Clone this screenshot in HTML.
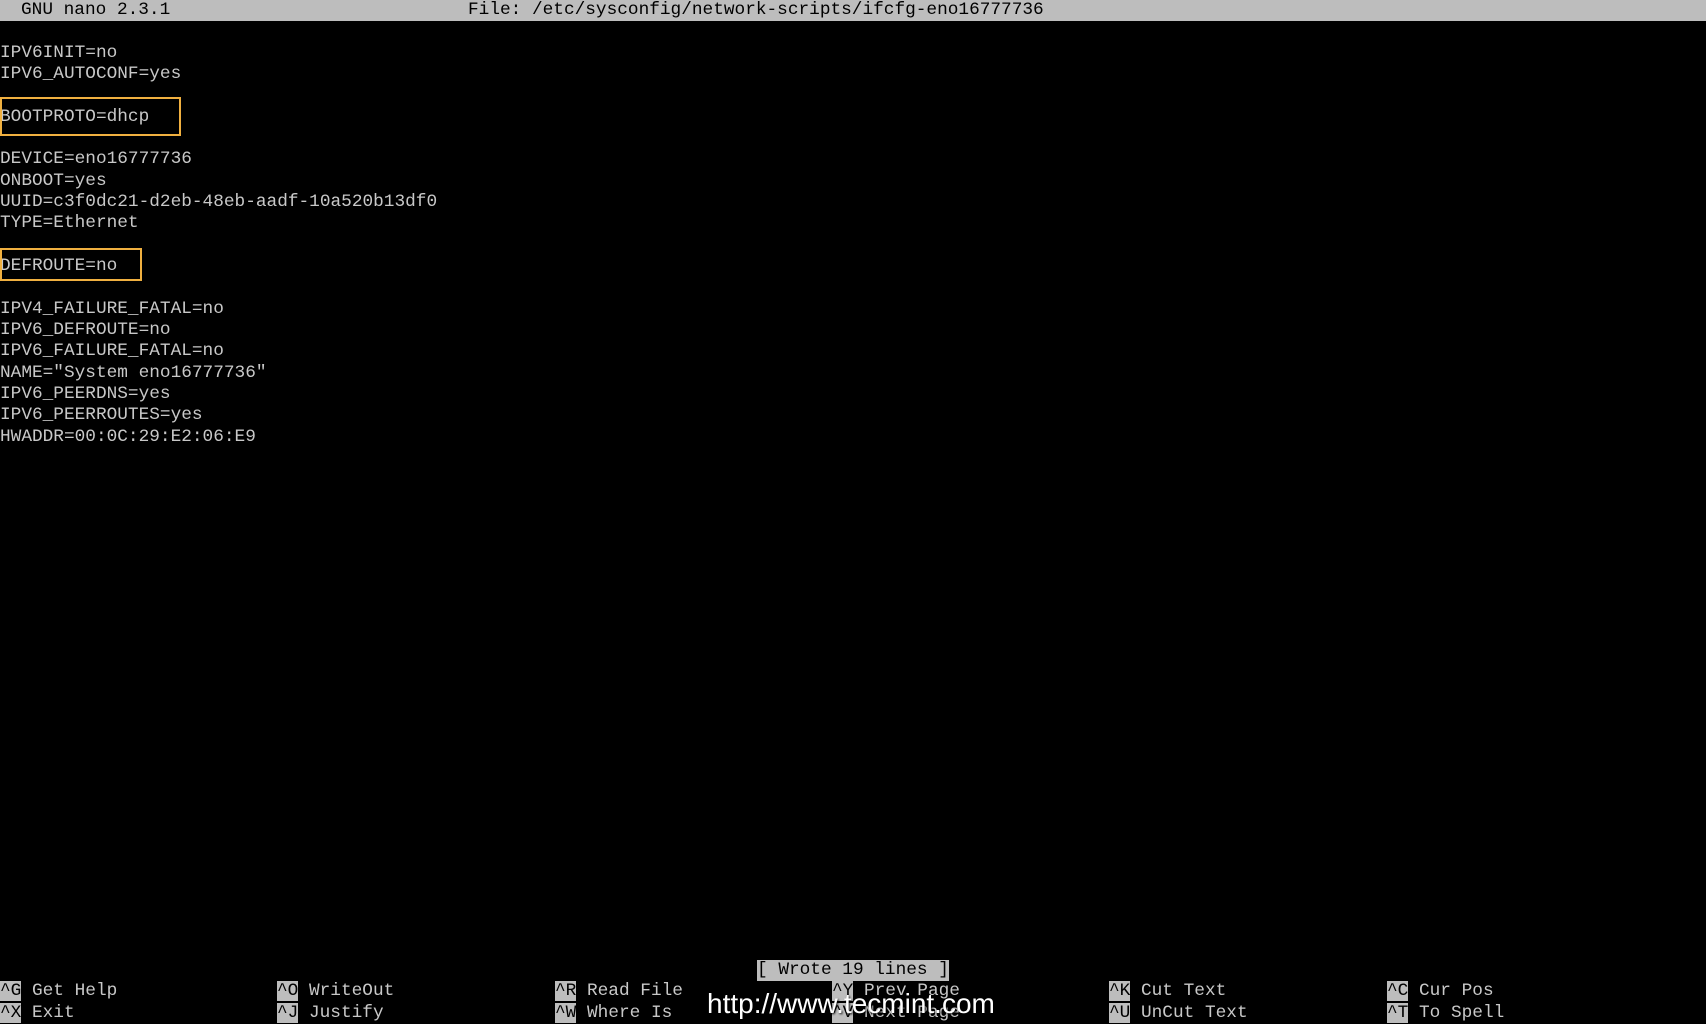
<!DOCTYPE html>
<html><head><meta charset="utf-8"><style>
body{margin:0;width:1706px;height:1024px;background:#000;overflow:hidden;position:relative;font-family:"Liberation Mono",monospace;font-size:17.77px;color:#c8c8c8}
.r{position:absolute;white-space:pre;line-height:21.33px;height:21.33px}
.top{position:absolute;left:0;top:0;width:1706px;height:21.33px;background:#bdbdbd;color:#000}
.k{background:#bdbdbd;color:#000}
.box{position:absolute;border:2.5px solid #f0b040;box-sizing:border-box}
.wm{position:absolute;left:707px;top:988px;font-family:"Liberation Sans",sans-serif;font-size:28px;color:#fff;text-shadow:1px 1px 2px #000;white-space:nowrap}
</style></head><body>
<div class="top"></div>
<div class="r" style="top:0;left:21px;color:#000">GNU nano 2.3.1</div>
<div class="r" style="top:0;left:468px;color:#000">File: /etc/sysconfig/network-scripts/ifcfg-eno16777736</div>
<div class="r" style="top:42.7px;left:0">IPV6INIT=no</div>
<div class="r" style="top:64px;left:0">IPV6_AUTOCONF=yes</div>
<div class="r" style="top:106.7px;left:0">BOOTPROTO=dhcp</div>
<div class="r" style="top:149.3px;left:0">DEVICE=eno16777736</div>
<div class="r" style="top:170.7px;left:0">ONBOOT=yes</div>
<div class="r" style="top:192px;left:0">UUID=c3f0dc21-d2eb-48eb-aadf-10a520b13df0</div>
<div class="r" style="top:213.3px;left:0">TYPE=Ethernet</div>
<div class="r" style="top:256px;left:0">DEFROUTE=no</div>
<div class="r" style="top:298.7px;left:0">IPV4_FAILURE_FATAL=no</div>
<div class="r" style="top:320px;left:0">IPV6_DEFROUTE=no</div>
<div class="r" style="top:341.3px;left:0">IPV6_FAILURE_FATAL=no</div>
<div class="r" style="top:362.7px;left:0">NAME="System eno16777736"</div>
<div class="r" style="top:384px;left:0">IPV6_PEERDNS=yes</div>
<div class="r" style="top:405.3px;left:0">IPV6_PEERROUTES=yes</div>
<div class="r" style="top:426.7px;left:0">HWADDR=00:0C:29:E2:06:E9</div>
<div class="box" style="left:0;top:97px;width:181px;height:39px"></div>
<div class="box" style="left:0;top:248px;width:142px;height:33px"></div>
<div class="r k" style="top:960px;left:757px">[ Wrote 19 lines ]</div>
<div class="r" style="top:981.3px;left:0"><span class="k">^G</span> Get Help</div>
<div class="r" style="top:1002.7px;left:0"><span class="k">^X</span> Exit</div>
<div class="r" style="top:981.3px;left:277px"><span class="k">^O</span> WriteOut</div>
<div class="r" style="top:1002.7px;left:277px"><span class="k">^J</span> Justify</div>
<div class="r" style="top:981.3px;left:555px"><span class="k">^R</span> Read File</div>
<div class="r" style="top:1002.7px;left:555px"><span class="k">^W</span> Where Is</div>
<div class="r" style="top:981.3px;left:832px"><span class="k">^Y</span> Prev Page</div>
<div class="r" style="top:1002.7px;left:832px"><span class="k">^V</span> Next Page</div>
<div class="r" style="top:981.3px;left:1109px"><span class="k">^K</span> Cut Text</div>
<div class="r" style="top:1002.7px;left:1109px"><span class="k">^U</span> UnCut Text</div>
<div class="r" style="top:981.3px;left:1387px"><span class="k">^C</span> Cur Pos</div>
<div class="r" style="top:1002.7px;left:1387px"><span class="k">^T</span> To Spell</div>
<div class="wm">http://www.tecmint.com</div>
</body></html>
